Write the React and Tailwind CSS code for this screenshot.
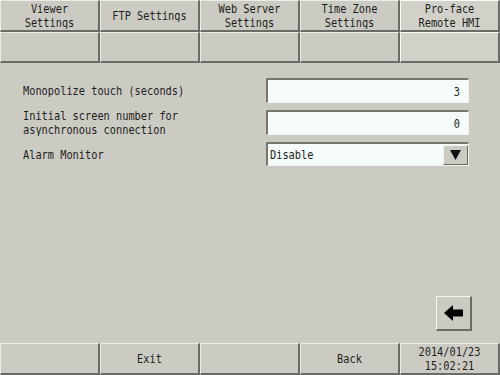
import React from 'react';

// tall narrow panel font, approximated with a stretched mono face
const T = ({ children, className = '' }) => (
  <span className={`inline-block scale-y-[1.15] font-['DejaVu_Sans_Mono',monospace] text-[10.3px] leading-[9px] text-[#1e1e1e] ${className}`}>
    {children}
  </span>
);

const Key = ({ lines = [], active = false, className = '' }) => (
  <div
    className={`flex flex-col items-center justify-center gap-[5px] border-t border-l border-r-2 border-b-2 ${
      active ? 'border-t-[#fbfbf7] border-l-[#fbfbf7] bg-[#d2d1c9]' : 'border-t-[#ecebe5] border-l-[#ecebe5] bg-[#cccbc3]'
    } border-r-[#6a6a66] border-b-[#6a6a66] ${className}`}
  >
    {lines.map((l) => (
      <T key={l}>{l}</T>
    ))}
  </div>
);

const Field = ({ value }) => (
  <div className="h-[25px] flex items-center justify-end pr-[8px] bg-[#f4fbf8] border-t-2 border-l-2 border-t-[#76766f] border-l-[#76766f] border-r border-b border-r-[#f2f2ee] border-b-[#f2f2ee]">
    <T>{value}</T>
  </div>
);

const tabs = [
  ['Viewer', 'Settings'],
  ['FTP Settings'],
  ['Web Server', 'Settings'],
  ['Time Zone', 'Settings'],
  ['Pro-face', 'Remote HMI'],
];

export default function App() {
  return (
    <div className="w-[500px] h-[375px] bg-[#cccbc3] flex flex-col overflow-hidden">
      <div className="grid grid-cols-5 h-[32px]">
        {tabs.map((t, i) => (
          <Key key={i} lines={t} active={i === 4} />
        ))}
      </div>
      <div className="grid grid-cols-5 h-[31px]">
        {[0, 1, 2, 3, 4].map((i) => (
          <Key key={i} active={i === 4} />
        ))}
      </div>

      <div className="flex-1 flex flex-col pl-[23px] pt-[15px]">
        <div className="grid grid-cols-[243px_203px] gap-y-[7px] items-center">
          <T>Monopolize touch (seconds)</T>
          <Field value="3" />

          <div className="flex flex-col gap-[5px]">
            <T>Initial screen number for</T>
            <T>asynchronous connection</T>
          </div>
          <Field value="0" />

          <T>Alarm Monitor</T>
          <div className="h-[24px] flex items-center bg-[#f4fbf8] border-t-2 border-l-2 border-t-[#76766f] border-l-[#76766f] border-r border-b border-r-[#f2f2ee] border-b-[#f2f2ee]">
            <div className="flex-1 flex items-center pl-[2px]">
              <T>Disable</T>
            </div>
            <div className="w-[25px] h-[20px] flex items-center justify-center bg-[#cccbc3] border-t border-l border-t-[#f2f2ee] border-l-[#f2f2ee] border-r border-b border-r-[#6a6a66] border-b-[#6a6a66]">
              <svg width="11" height="10" viewBox="0 0 11 10">
                <path d="M0 0 H11 L5.5 10 Z" fill="#111" />
              </svg>
            </div>
          </div>
        </div>

        <div className="mt-auto self-end mr-[28px] mb-[12px] w-[36px] h-[35px] flex items-center justify-center bg-[#cccbc3] border-t border-l border-t-[#f4f4f0] border-l-[#f4f4f0] border-r-2 border-b-2 border-r-[#6a6a66] border-b-[#6a6a66]">
          <svg width="20" height="16" viewBox="0 0 20 16">
            <path d="M0 8 L9 0 V4.5 H19 V11.5 H9 V16 Z" fill="#000" />
          </svg>
        </div>
      </div>

      <div className="grid grid-cols-5 h-[32px]">
        <Key />
        <Key lines={['Exit']} />
        <Key />
        <Key lines={['Back']} />
        <Key lines={['2014/01/23', '15:02:21']} />
      </div>
    </div>
  );
}
